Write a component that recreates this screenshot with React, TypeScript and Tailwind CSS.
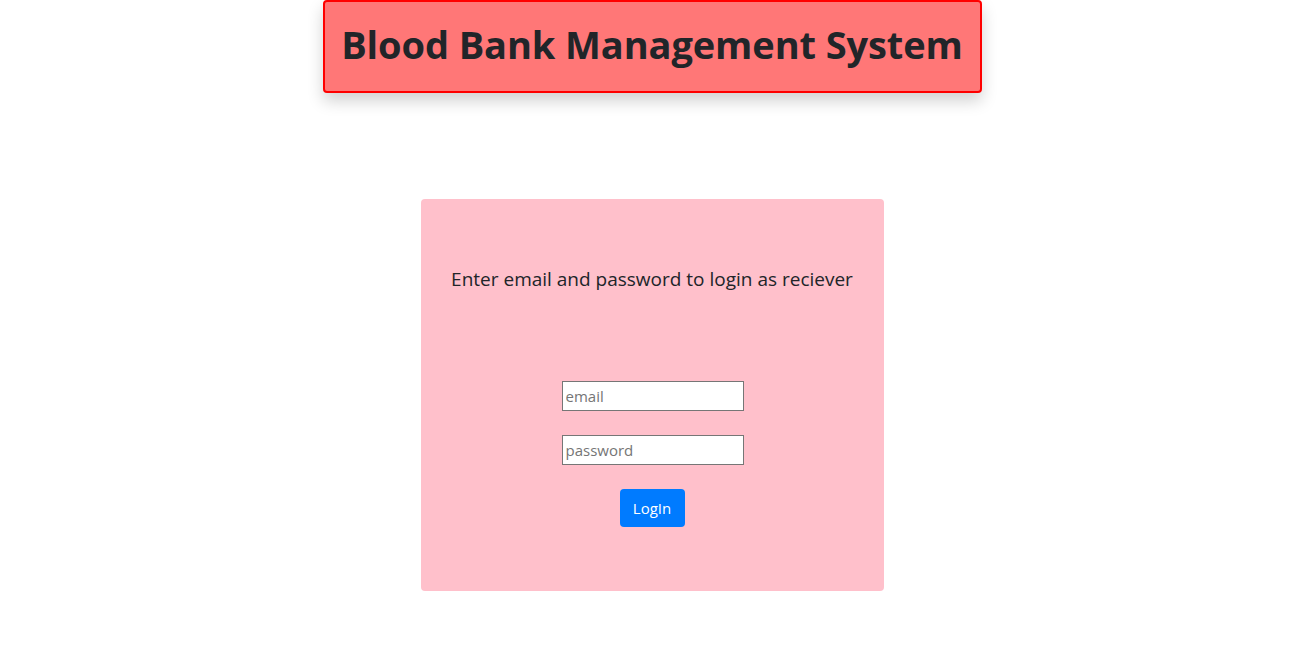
import React from "react";

export default function App() {
  return (
    <div className="min-h-screen bg-white text-[#212529]" style={{ fontFamily: '"Open Sans", "Noto Sans", sans-serif' }}>
      <div className="flex justify-center">
        <div className="w-[659px] h-[93px] pb-[3px] flex items-center justify-center bg-[#ff7777] border-2 border-[#ff0000] rounded-[4px] shadow-[0_8px_16px_rgba(0,0,0,0.18)]">
          <h1 className="text-[38px] font-bold leading-[1.2] tracking-[-0.1px] whitespace-nowrap">Blood Bank Management System</h1>
        </div>
      </div>
      <div className="flex justify-center mt-[106px]">
        <div className="w-[463px] h-[392px] bg-[#ffc0cb] rounded-[4px] flex flex-col items-center">
          <p className="mt-[68px] text-[19px] leading-[24px] whitespace-nowrap">Enter email and password to login as reciever</p>
          <input
            type="text"
            placeholder="email"
            className="mt-[90px] ml-[1px] w-[182px] h-[30px] bg-white border border-[#767676] px-[3px] text-[15px] placeholder:text-[#757575] outline-none"
          />
          <input
            type="password"
            placeholder="password"
            className="mt-[24px] ml-[1px] w-[182px] h-[30px] bg-white border border-[#767676] px-[3px] text-[15px] placeholder:text-[#757575] outline-none"
          />
          <button className="mt-[24px] w-[65px] h-[38px] bg-[#007bff] text-white text-[15px] rounded-[4px]">LogIn</button>
        </div>
      </div>
    </div>
  );
}
